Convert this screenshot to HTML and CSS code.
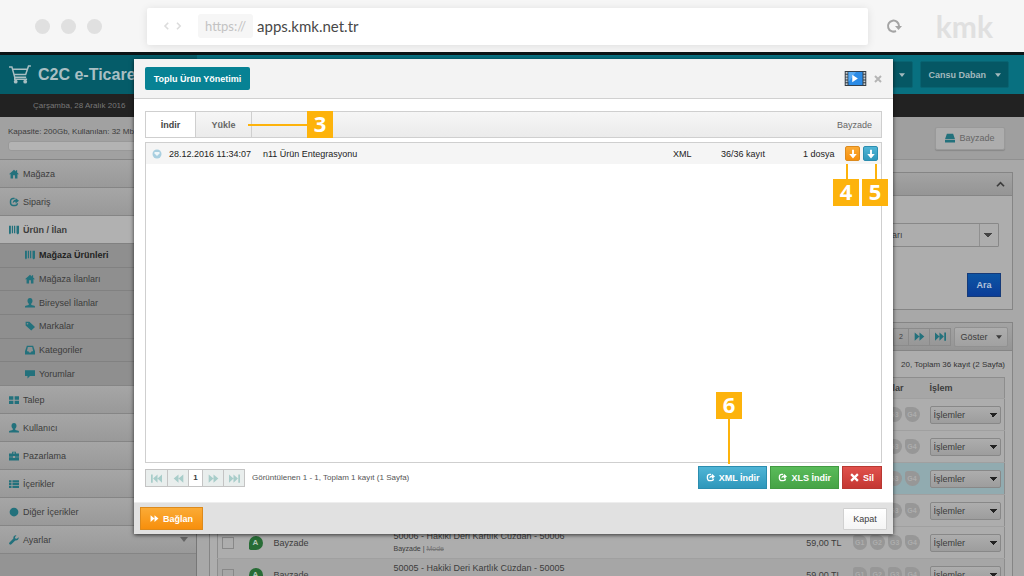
FILE: index.html
```html
<!DOCTYPE html>
<html lang="tr">
<head>
<meta charset="utf-8">
<title>Toplu Ürün Yönetimi</title>
<link rel="stylesheet" href="styles.css">
</head>
<body>
<svg class="sprite" aria-hidden="true">
  <symbol id="home" viewBox="0 0 16 16"><path d="M8 1 0 8.500h2.500V15H6.500v-5h3v5h4V8.500H16L13 5.600V2h-2v1.800z"/></symbol>
  <symbol id="share" viewBox="0 0 16 16"><path d="M9 2.500H6.500a4 4 0 0 0-4 4v3a4 4 0 0 0 4 4h3a4 4 0 0 0 4-3.500" fill="none" stroke="currentColor" stroke-width="2.400"/><path d="M6 10c0-3.500 1.500-5.500 4.500-5.500V1.500L16 6l-5.500 4.500v-3C8.500 7.500 7 8.500 6 10z"/></symbol>
  <symbol id="books" viewBox="0 0 16 16"><path d="M0 1h3v12l-1.500 2L0 13zM4.500 1h2v12h-2zM8 1h2v12H8zM12 1h4v12l-2 2-2-2z"/></symbol>
  <symbol id="user" viewBox="0 0 16 16"><path d="M8 0c2.600 0 4 1.800 4 4.500 0 2-.9 3.700-2 4.600V11l5 1.500c.8.300 1 1 1 2.500H0c0-1.500.2-2.200 1-2.500L6 11V9.100C4.900 8.200 4 6.500 4 4.500 4 1.800 5.400 0 8 0z"/></symbol>
  <symbol id="tag" viewBox="0 0 16 16"><path fill-rule="evenodd" d="M1 1h6l9 8.500L10 15 1 7zM4 3a1.300 1.300 0 1 0 0 2.600A1.300 1.300 0 0 0 4 3z"/></symbol>
  <symbol id="inbox" viewBox="0 0 16 16"><path fill-rule="evenodd" d="M3 1h10l3 9v5H0v-5zM4.500 3 3 10h2.500l1 2h3l1-2H13l-1.500-7z"/></symbol>
  <symbol id="comment" viewBox="0 0 16 16"><path d="M0 2h16v9H8l-4 4v-4H0z"/></symbol>
  <symbol id="grid" viewBox="0 0 16 16"><path d="M0 2h7v5.500H0zM9 2h7v5.500H9zM0 9h7v5.500H0zM9 9h7v5.500H9z"/></symbol>
  <symbol id="case" viewBox="0 0 16 16"><path d="M5 4V1h6v3h5v5H9.500V8h-3v1H0V4zm1.500 0h3V2.500h-3zM0 10h6.500v1h3v-1H16v5H0z" fill-rule="evenodd"/></symbol>
  <symbol id="list" viewBox="0 0 16 16"><path d="M0 2h4v3.500H0zM5.500 2H16v3.500H5.500zM0 6.500h4V10H0zM5.500 6.500H16V10H5.500zM0 11h4v3.500H0zM5.500 11H16v3.500H5.500z"/></symbol>
  <symbol id="dot" viewBox="0 0 16 16"><circle cx="8" cy="8" r="7"/></symbol>
  <symbol id="wrench" viewBox="0 0 16 16"><path d="M15.500 3.500 12.500 6 10 5.500 9.500 3.500 12 .5C9 0 6.500 2 7 5.500L.8 11.800a2 2 0 0 0 3 3L10 8.700c3.500.6 6-2 5.500-5.200z"/></symbol>
  <symbol id="store" viewBox="0 0 16 16"><path d="M3 1h10l3 9H0zM0 11h16v4H0z"/></symbol>
  <symbol id="fwd" viewBox="0 0 16 16"><path d="M1 2l7 6-7 6zM8 2l7 6-7 6z"/></symbol>
  <symbol id="back" viewBox="0 0 16 16"><path d="M15 2 8 8l7 6zM8 2 1 8l7 6z"/></symbol>
  <symbol id="last" viewBox="0 0 16 16"><path d="M0 2l6.500 6L0 14zM6.500 2 13 8l-6.500 6zM13.500 2H16v12h-2.500z"/></symbol>
  <symbol id="first" viewBox="0 0 16 16"><path d="M16 2 9.500 8l6.500 6zM9.500 2 3 8l6.500 6zM0 2h2.500v12H0z"/></symbol>
  <symbol id="down" viewBox="0 0 16 16"><path d="M6.500 1h3v7H14l-6 7-6-7h4.500z"/></symbol>
  <symbol id="cross" viewBox="0 0 16 16"><path d="M2 2l12 12M14 2 2 14" stroke="currentColor" stroke-width="4"/></symbol>
  <symbol id="caret" viewBox="0 0 8 5"><path d="M0 0h8L4 5z"/></symbol>
</svg>

<header class="browser">
  <div class="dots"><i></i><i></i><i></i></div>
  <div class="address">
    <svg class="nav-arrows" viewBox="0 0 24 10"><path d="M6 1 2 5l4 4M17 1l4 4-4 4"/></svg>
    <span class="scheme">https://</span><span class="host">apps.kmk.net.tr</span>
  </div>
  <svg class="reload" viewBox="0 0 16 16"><path d="M10 13A5.500 5.500 0 1 1 13 8" fill="none" stroke="#a4a4a4" stroke-width="2"/><path d="M9 8h7l-3.500 4z" fill="#a4a4a4"/></svg>
  <span class="kmk">kmk</span>
</header>

<div class="app">
  <div class="topbar">
    <div class="brand">
      <svg class="cart" viewBox="0 0 24 20"><path d="M1 2h3l3 11h12M5 4.500h15M6.500 10h12L21.500 1H24M7 13v2h13" fill="none" stroke="currentColor" stroke-width="1.600"/><circle cx="8" cy="17.500" r="2"/><circle cx="18" cy="17.500" r="2"/></svg>
      C2C e-Ticaret
    </div>
    <div class="account">
      <button class="top-btn narrow" aria-label="Menü"><svg class="caret"><use href="#caret"/></svg></button>
      <button class="top-btn">Cansu Daban <svg class="caret"><use href="#caret"/></svg></button>
    </div>
  </div>
  <div class="datebar">Çarşamba, 28 Aralık 2016</div>

  <div class="columns">
    <nav class="sidebar">
      <div class="capacity"><label for="cap">Kapasite: 200Gb, Kullanılan: 32 Mb</label><div class="meter" id="cap"></div></div>
      <a class="item" href="#"><svg><use href="#home"/></svg>Mağaza</a>
      <a class="item" href="#"><svg><use href="#share"/></svg>Sipariş</a>
      <a class="item active" href="#"><svg><use href="#books"/></svg>Ürün / İlan</a>
      <div class="submenu">
        <a class="current" href="#"><svg><use href="#books"/></svg>Mağaza Ürünleri</a>
        <a href="#"><svg><use href="#home"/></svg>Mağaza İlanları</a>
        <a href="#"><svg><use href="#user"/></svg>Bireysel İlanlar</a>
        <a href="#"><svg><use href="#tag"/></svg>Markalar</a>
        <a href="#"><svg><use href="#inbox"/></svg>Kategoriler</a>
        <a href="#"><svg><use href="#comment"/></svg>Yorumlar</a>
      </div>
      <a class="item" href="#"><svg><use href="#grid"/></svg>Talep</a>
      <a class="item" href="#"><svg><use href="#user"/></svg>Kullanıcı</a>
      <a class="item" href="#"><svg><use href="#case"/></svg>Pazarlama</a>
      <a class="item" href="#"><svg><use href="#list"/></svg>İçerikler</a>
      <a class="item" href="#"><svg><use href="#dot"/></svg>Diğer İçerikler</a>
      <a class="item" href="#"><svg><use href="#wrench"/></svg>Ayarlar<svg class="caret end"><use href="#caret"/></svg></a>
    </nav>

    <main class="content">
      <div class="toolbar"><button class="store-btn"><svg><use href="#store"/></svg>Bayzade</button></div>

      <section class="panel filter">
        <div class="panel-head"><svg class="chevron" viewBox="0 0 10 8"><path d="M1 6l4-4 4 4"/></svg></div>
        <div class="filter-body">
          <select class="kind" aria-label="Tür"><option>Mağaza İlanları</option></select>
          <button class="search">Ara</button>
        </div>
      </section>

      <section class="panel results">
        <div class="panel-head pager-head">
          <div class="pager dim">
            <button>2</button>
            <button aria-label="Sonraki"><svg><use href="#fwd"/></svg></button>
            <button aria-label="Son"><svg><use href="#last"/></svg></button>
          </div>
          <button class="show">Göster <svg class="caret"><use href="#caret"/></svg></button>
        </div>
        <p class="count">20, Toplam 36 kayıt (2 Sayfa)</p>
        <table class="products">
          <colgroup><col class="c-check"><col class="c-badge"><col class="c-store"><col><col class="c-price"><col class="c-flags"><col class="c-act"></colgroup>
          <thead><tr><th></th><th></th><th></th><th></th><th></th><th class="flag-head">Dopinglar</th><th>İşlem</th></tr></thead>
          <tbody>
            <tr><td></td><td></td><td></td><td></td><td></td><td><div class="flags"><i>G3</i><i>G4</i></div></td><td><select aria-label="İşlemler"><option>İşlemler</option></select></td></tr>
            <tr><td></td><td></td><td></td><td></td><td></td><td><div class="flags"><i>G3</i><i>G4</i></div></td><td><select aria-label="İşlemler"><option>İşlemler</option></select></td></tr>
            <tr class="marked"><td></td><td></td><td></td><td></td><td></td><td><div class="flags"><i>G3</i><i>G4</i></div></td><td><select aria-label="İşlemler"><option>İşlemler</option></select></td></tr>
            <tr><td></td><td></td><td></td><td></td><td></td><td><div class="flags"><i>G3</i><i>G4</i></div></td><td><select aria-label="İşlemler"><option>İşlemler</option></select></td></tr>
            <tr><td><input type="checkbox" aria-label="50006"></td><td><b class="badge">A</b></td><td>Bayzade</td><td><div class="name">50006 - Hakiki Deri Kartlık Cüzdan - 50006</div><div class="meta">Bayzade | <s>Mode</s></div></td><td class="price">59,00 TL</td><td><div class="flags"><i>G1</i><i>G2</i><i>G3</i><i>G4</i></div></td><td><select aria-label="İşlemler"><option>İşlemler</option></select></td></tr>
            <tr class="alt"><td><input type="checkbox" aria-label="50005"></td><td><b class="badge">A</b></td><td>Bayzade</td><td><div class="name">50005 - Hakiki Deri Kartlık Cüzdan - 50005</div><div class="meta">&nbsp;</div></td><td class="price">59,00 TL</td><td><div class="flags"><i>G1</i><i>G2</i><i>G3</i><i>G4</i></div></td><td><select aria-label="İşlemler"><option>İşlemler</option></select></td></tr>
          </tbody>
        </table>
      </section>
    </main>
  </div>

  <div class="modal" role="dialog" aria-label="Toplu Ürün Yönetimi">
    <div class="modal-head">
      <button class="title-btn">Toplu Ürün Yönetimi</button>
      <svg class="film" viewBox="0 0 23 16"><path fill="#333c44" d="M0 0h23v16H0z"/><path fill="#2b8be6" d="M4 1h15v14H4z"/><path fill="#56a9f2" d="M4 1h8L4 12z"/><path d="M2 1v14M21 1v14" stroke="#c4ccd2" stroke-width="2" stroke-dasharray="2 1"/><path fill="#fff" d="M8 4l6 4-6 4z"/></svg>
      <button class="close" aria-label="Kapat"><svg><use href="#cross"/></svg></button>
    </div>
    <div class="modal-body">
      <div class="tabs">
        <button class="tab on">İndir</button><button class="tab">Yükle</button>
        <span class="tabs-owner">Bayzade</span>
      </div>
      <div class="list">
        <div class="record">
          <svg class="ok" viewBox="0 0 10 10"><circle cx="5" cy="5" r="4.500" fill="#a9cfe0"/><path d="M2.500 4.500 5 7l2.500-2.500V3h-5z" fill="#eef6f9"/></svg>
          <span>28.12.2016 11:34:07</span><span class="record-name">n11 Ürün Entegrasyonu</span>
          <span class="fmt">XML</span><span class="num">36/36 kayıt</span><span class="files">1 dosya</span>
          <button class="mini orange" aria-label="XML indir"><svg><use href="#down"/></svg></button>
          <button class="mini blue" aria-label="XLS indir"><svg><use href="#down"/></svg></button>
        </div>
      </div>
      <div class="list-foot">
        <div class="pager faded">
          <button aria-label="İlk"><svg><use href="#first"/></svg></button>
          <button aria-label="Önceki"><svg><use href="#back"/></svg></button>
          <button class="page">1</button>
          <button aria-label="Sonraki"><svg><use href="#fwd"/></svg></button>
          <button aria-label="Son"><svg><use href="#last"/></svg></button>
        </div>
        <span class="shown">Görüntülenen 1 - 1, Toplam 1 kayıt (1 Sayfa)</span>
        <button class="act blue"><svg><use href="#share"/></svg>XML İndir</button>
        <button class="act green"><svg><use href="#share"/></svg>XLS İndir</button>
        <button class="act red"><svg><use href="#cross"/></svg>Sil</button>
      </div>
    </div>
    <div class="modal-foot">
      <button class="act orange connect"><svg><use href="#fwd"/></svg>Bağlan</button>
      <button class="dismiss">Kapat</button>
    </div>
    <div class="note n3">3</div>
    <div class="note n4">4</div>
    <div class="note n5">5</div>
    <div class="note n6">6</div>
  </div>
</div>
</body>
</html>
```

FILE: styles.css
```css
* { box-sizing: border-box; }
body { margin: 0; height: 100vh; display: flex; flex-direction: column; overflow: hidden; font: 9px/12px "Liberation Sans", Arial, sans-serif; color: #3c3c3c; background: #a8a8a8; }
button, select, input { font: inherit; color: inherit; margin: 0; }
button { padding: 0; display: inline-flex; align-items: center; justify-content: center; }
a { color: inherit; text-decoration: none; }
svg { fill: currentColor; flex: none; }
.sprite { position: absolute; width: 0; height: 0; }
.caret { width: 6px; height: 4px; }

.browser { flex: none; height: 52px; display: flex; align-items: center; padding: 0 31px 0 35px; background: #f6f6f6; }
.dots { display: flex; gap: 11px; width: 112px; }
.dots i { width: 15px; height: 15px; border-radius: 50%; background: #e0e0e0; }
.address { flex: 1; height: 37px; display: flex; align-items: center; padding-left: 14px; background: #fff; border-radius: 2px; box-shadow: 0 1px 8px rgba(0,0,0,.1); }
.nav-arrows { width: 24px; height: 8px; fill: none; stroke: #dcdcdc; stroke-width: 2; }
.scheme { margin: 0 4px 0 13px; padding: 0 7px; border-radius: 3px; background: #f6f6f6; color: #c3c3c3; font: 13px/24px Lato, sans-serif; }
.host { font: 15px/24px Lato, sans-serif; color: #484848; }
.reload { width: 16px; height: 16px; margin: 0 34px 0 18px; }
.kmk { font: bold 30px/40px Lato, sans-serif; color: #e0e0e0; }

.app { position: relative; flex: 1; min-height: 0; display: flex; flex-direction: column; border-top: 3px solid #0c1416; }
.topbar { flex: none; height: 39px; display: flex; align-items: center; justify-content: space-between; background: #087080; }
.brand { width: 197px; height: 100%; display: flex; align-items: center; gap: 7px; padding-left: 8px; background: #055c69; color: #a9bfc3; font-size: 16px; font-weight: bold; }
.cart { width: 23px; height: 19px; }
.account { display: flex; gap: 7px; padding-right: 15px; }
.top-btn { height: 27px; padding: 0 7px; gap: 9px; border: 1px solid #086472; border-radius: 2px; background: #055764; color: #a3b9bd; font-weight: bold; }
.top-btn.narrow { width: 56px; justify-content: flex-end; }
.datebar { flex: none; height: 23px; padding-left: 33px; background: #222; color: #777; font-size: 8px; line-height: 23px; }

.columns { flex: 1; min-height: 0; display: grid; grid-template-columns: 197px 1fr; }
.sidebar { background: #949494; border-right: 1px solid #777; }
.capacity { height: 42px; padding: 9px 8px 0; background: #a1a1a1; font-size: 8px; white-space: nowrap; }
.meter { height: 10px; margin-top: 3px; border: 1px solid #999; border-radius: 3px; background: #b3b3b3; }
.item { height: 28px; display: flex; align-items: center; gap: 4px; padding: 0 8px 0 9px; border-top: 1px solid #858585; background: linear-gradient(#a6a6a6, #999); }
.item svg, .submenu svg { width: 10px; height: 10px; color: #23717c; }
.item .caret.end { width: 8px; height: 5px; margin-left: auto; color: #666; }
.item.active { background: #b1b1b1; font-weight: bold; }
.item:last-child { height: 29px; border-bottom: 1px solid #858585; }
.submenu { height: 142px; display: flex; flex-direction: column; background: #8f8f8f; }
.submenu a { flex: 1; display: flex; align-items: center; gap: 4px; padding-left: 25px; border-top: 1px solid #818181; }
.submenu .current { font-weight: bold; color: #222; }

.content { min-width: 0; background: #a8a8a8; }
.toolbar { height: 43px; display: flex; justify-content: flex-end; align-items: center; padding-right: 19px; border-bottom: 1px solid #909090; background: #9f9f9f; }
.store-btn { height: 23px; width: 70px; gap: 4px; border: 1px solid #999; border-radius: 2px; background: #adadad; color: #666; box-shadow: 0 1px 1px #888; }
.store-btn svg { width: 10px; height: 10px; color: #23717c; }
.panel { margin: 12px 11px 0 12px; border: 1px solid #858585; background: #adadad; }
.panel-head { height: 23px; display: flex; align-items: center; justify-content: flex-end; padding-right: 7px; border-bottom: 1px solid #858585; background: linear-gradient(#a3a3a3, #959595); }
.chevron { width: 9px; height: 7px; fill: none; stroke: #3c3c3c; stroke-width: 2; }
.filter-body { display: flex; flex-direction: column; align-items: flex-end; gap: 26px; padding: 27px 11px 12px; }
select { appearance: none; border: 1px solid #888; border-radius: 1px; }
.kind { width: 162px; height: 24px; margin-right: 2px; padding-left: 3px; background: conic-gradient(from -45deg at 50% 100%, #444 90deg, transparent 0) no-repeat right 6px center / 8px 4px, linear-gradient(#909090, #909090) no-repeat right 18px top / 1px 100%, #adadad; }
.search { width: 34px; height: 24px; border: 1px solid #153a78; background: linear-gradient(#0c55a4, #0b3d98); color: #b5c4da; font-weight: bold; }
.results { border-bottom: 0; }
.pager-head { height: 28px; padding-right: 4px; gap: 3px; }
.pager { display: flex; height: 18px; border: 1px solid #8b8b8b; }
.pager button { width: 21px; border: 0; border-left: 1px solid #8b8b8b; background: none; }
.pager button:first-child { border-left: 0; }
.pager svg { width: 11px; height: 11px; color: #23717c; }
.pager.dim button:first-child { width: 14px; font-size: 7px; }
.show { height: 20px; width: 54px; gap: 8px; border: 1px solid #919191; border-radius: 2px; background: linear-gradient(#adadad, #a1a1a1); }
.count { margin: 0; padding: 8px 7px 6px; text-align: right; font-size: 8px; color: #333; }
.products { width: calc(100% - 14px); margin: 0 7px; border-collapse: collapse; table-layout: fixed; border: 1px solid #8d8d8d; }
.c-check { width: 27px; } .c-badge { width: 25px; } .c-store { width: 120px; }
.c-price { width: 72px; } .c-flags { width: 81px; } .c-act { width: 75px; }
.products th { height: 21px; padding: 0; text-align: left; background: #a6a6a6; }
.products .flag-head { text-align: right; padding-right: 26px; }
.products td { height: 32px; padding: 0 4px; border-top: 1px solid #a0a0a0; }
.products th:last-child, .products td:last-child { padding-left: 0; padding-right: 0; }
.products .marked { background: #91abb0; }
.products .alt { background: #a6a6a6; }
.products input { appearance: none; display: block; width: 12px; height: 12px; border: 1px solid #888; }
.products select { display: block; width: 71px; height: 18px; padding: 0 3px; border-radius: 2px; background: conic-gradient(from -45deg at 50% 100%, #222 90deg, transparent 0) no-repeat right 3px center / 8px 4px, linear-gradient(#adadad, #9d9d9d); }
.kind, .products select { --caret: 1; }
.badge { display: block; width: 14px; height: 14px; border-radius: 8px 8px 8px 2px; background: #286c36; color: #b4c6b7; font-size: 8px; line-height: 14px; text-align: center; }
.name { white-space: nowrap; line-height: 13px; }
.meta { font-size: 7px; line-height: 12px; }
.meta s { color: #777; }
.products .price { text-align: right; padding-right: 7px; }
.flags { display: flex; justify-content: flex-end; gap: 3px; padding-right: 6px; }
.flags i { width: 15px; height: 15px; border-radius: 3px 8px 8px 8px; background: #979797; color: #adadad; font: bold 7px/15px "Liberation Sans", sans-serif; text-align: center; }

.modal { position: absolute; top: 4px; left: 134px; right: 131px; background: #fff; box-shadow: 0 1px 4px rgba(0,0,0,.7); }
.modal-head { height: 40px; display: flex; align-items: center; padding: 0 11px; background: #f3f3f3; border-bottom: 1px solid #d0d0d0; }
.title-btn { height: 23px; width: 105px; border: 0; border-radius: 2px; background: #078294; color: #fff; font-weight: bold; }
.film { width: 23px; height: 15px; margin-left: auto; }
.close { border: 0; background: none; margin-left: 7px; color: #b5b5b5; }
.close svg { width: 8px; height: 8px; }
.modal-body { padding: 12px 11px 0; }
.tabs { height: 27px; display: flex; border: 1px solid #cfcfcf; background: linear-gradient(#f6f6f6, #ebebeb); }
.tab { width: 56px; border: 0; border-right: 1px solid #cfcfcf; background: none; color: #666; font-weight: bold; }
.tab.on { width: 50px; background: #fff; color: #444; }
.tabs-owner { margin: auto 9px auto auto; color: #666; }
.list { height: 321px; margin-top: 4px; border: 1px solid #cfcfcf; }
.record { height: 21px; display: flex; align-items: center; padding: 0 3px 0 6px; background: #f5f5f5; color: #222; white-space: nowrap; }
.ok { width: 10px; height: 10px; margin-right: 7px; }
.record-name { margin-left: 12px; flex: 1; }
.fmt { width: 48px; }
.num { width: 82px; }
.files { width: 42px; }
.mini { width: 15px; height: 15px; border: 1px solid; border-radius: 2px; color: #fff; }
.mini svg { width: 10px; height: 10px; }
.mini + .mini { margin-left: 3px; }
.orange { background: linear-gradient(#fbab36, #f78f0c); border-color: #dc8a1d; }
.blue { background: linear-gradient(#50b5d6, #2e97bb); border-color: #2b8daf; }
.green { background: linear-gradient(#5abb5a, #46a346); border-color: #429a42; }
.red { background: linear-gradient(#e0514c, #c43732); border-color: #b83832; }
.list-foot { height: 39px; display: flex; align-items: flex-start; gap: 3px; padding-top: 3px; }
.pager.faded { margin-top: 3px; background: #e9eeed; border-color: #c4c4c4; }
.faded button { border-color: #c4c4c4; }
.faded svg { color: #a8cdca; }
.pager .page { width: 14px; background: #fff; font-size: 8px; font-weight: bold; }
.shown { margin: 6px auto 0 4px; color: #555; font-size: 8px; }
.act { height: 23px; padding: 0 7px; gap: 4px; border-width: 1px; border-style: solid; color: #fff; font-weight: bold; }
.act svg { width: 9px; height: 9px; }
.modal-foot { height: 32px; display: flex; align-items: center; justify-content: space-between; padding: 0 6px; background: #e1e1e1; border-top: 1px solid #eee; }
.connect { width: 63px; }
.dismiss { width: 44px; height: 22px; border: 1px solid #d0d0d0; border-radius: 1px; background: linear-gradient(#fff, #f4f4f4); }

.note { position: absolute; width: 26px; height: 27px; background: #fdb30c; color: #fff; font: bold 22px/25px "Noto Sans", sans-serif; text-align: center; }
.note::after { content: ""; position: absolute; background: #fdb30c; }
.n3 { left: 173px; top: 52px; }
.n3::after { width: 59px; height: 2px; right: 100%; top: 13px; }
.n4 { right: 34px; top: 120px; }
.n4::after, .n5::after { width: 2px; height: 15px; bottom: 100%; left: 13px; }
.n5 { right: 5px; top: 120px; }
.n6 { left: 582px; top: 333px; }
.n6::after { width: 2px; height: 45px; top: 100%; left: 12px; }
```
